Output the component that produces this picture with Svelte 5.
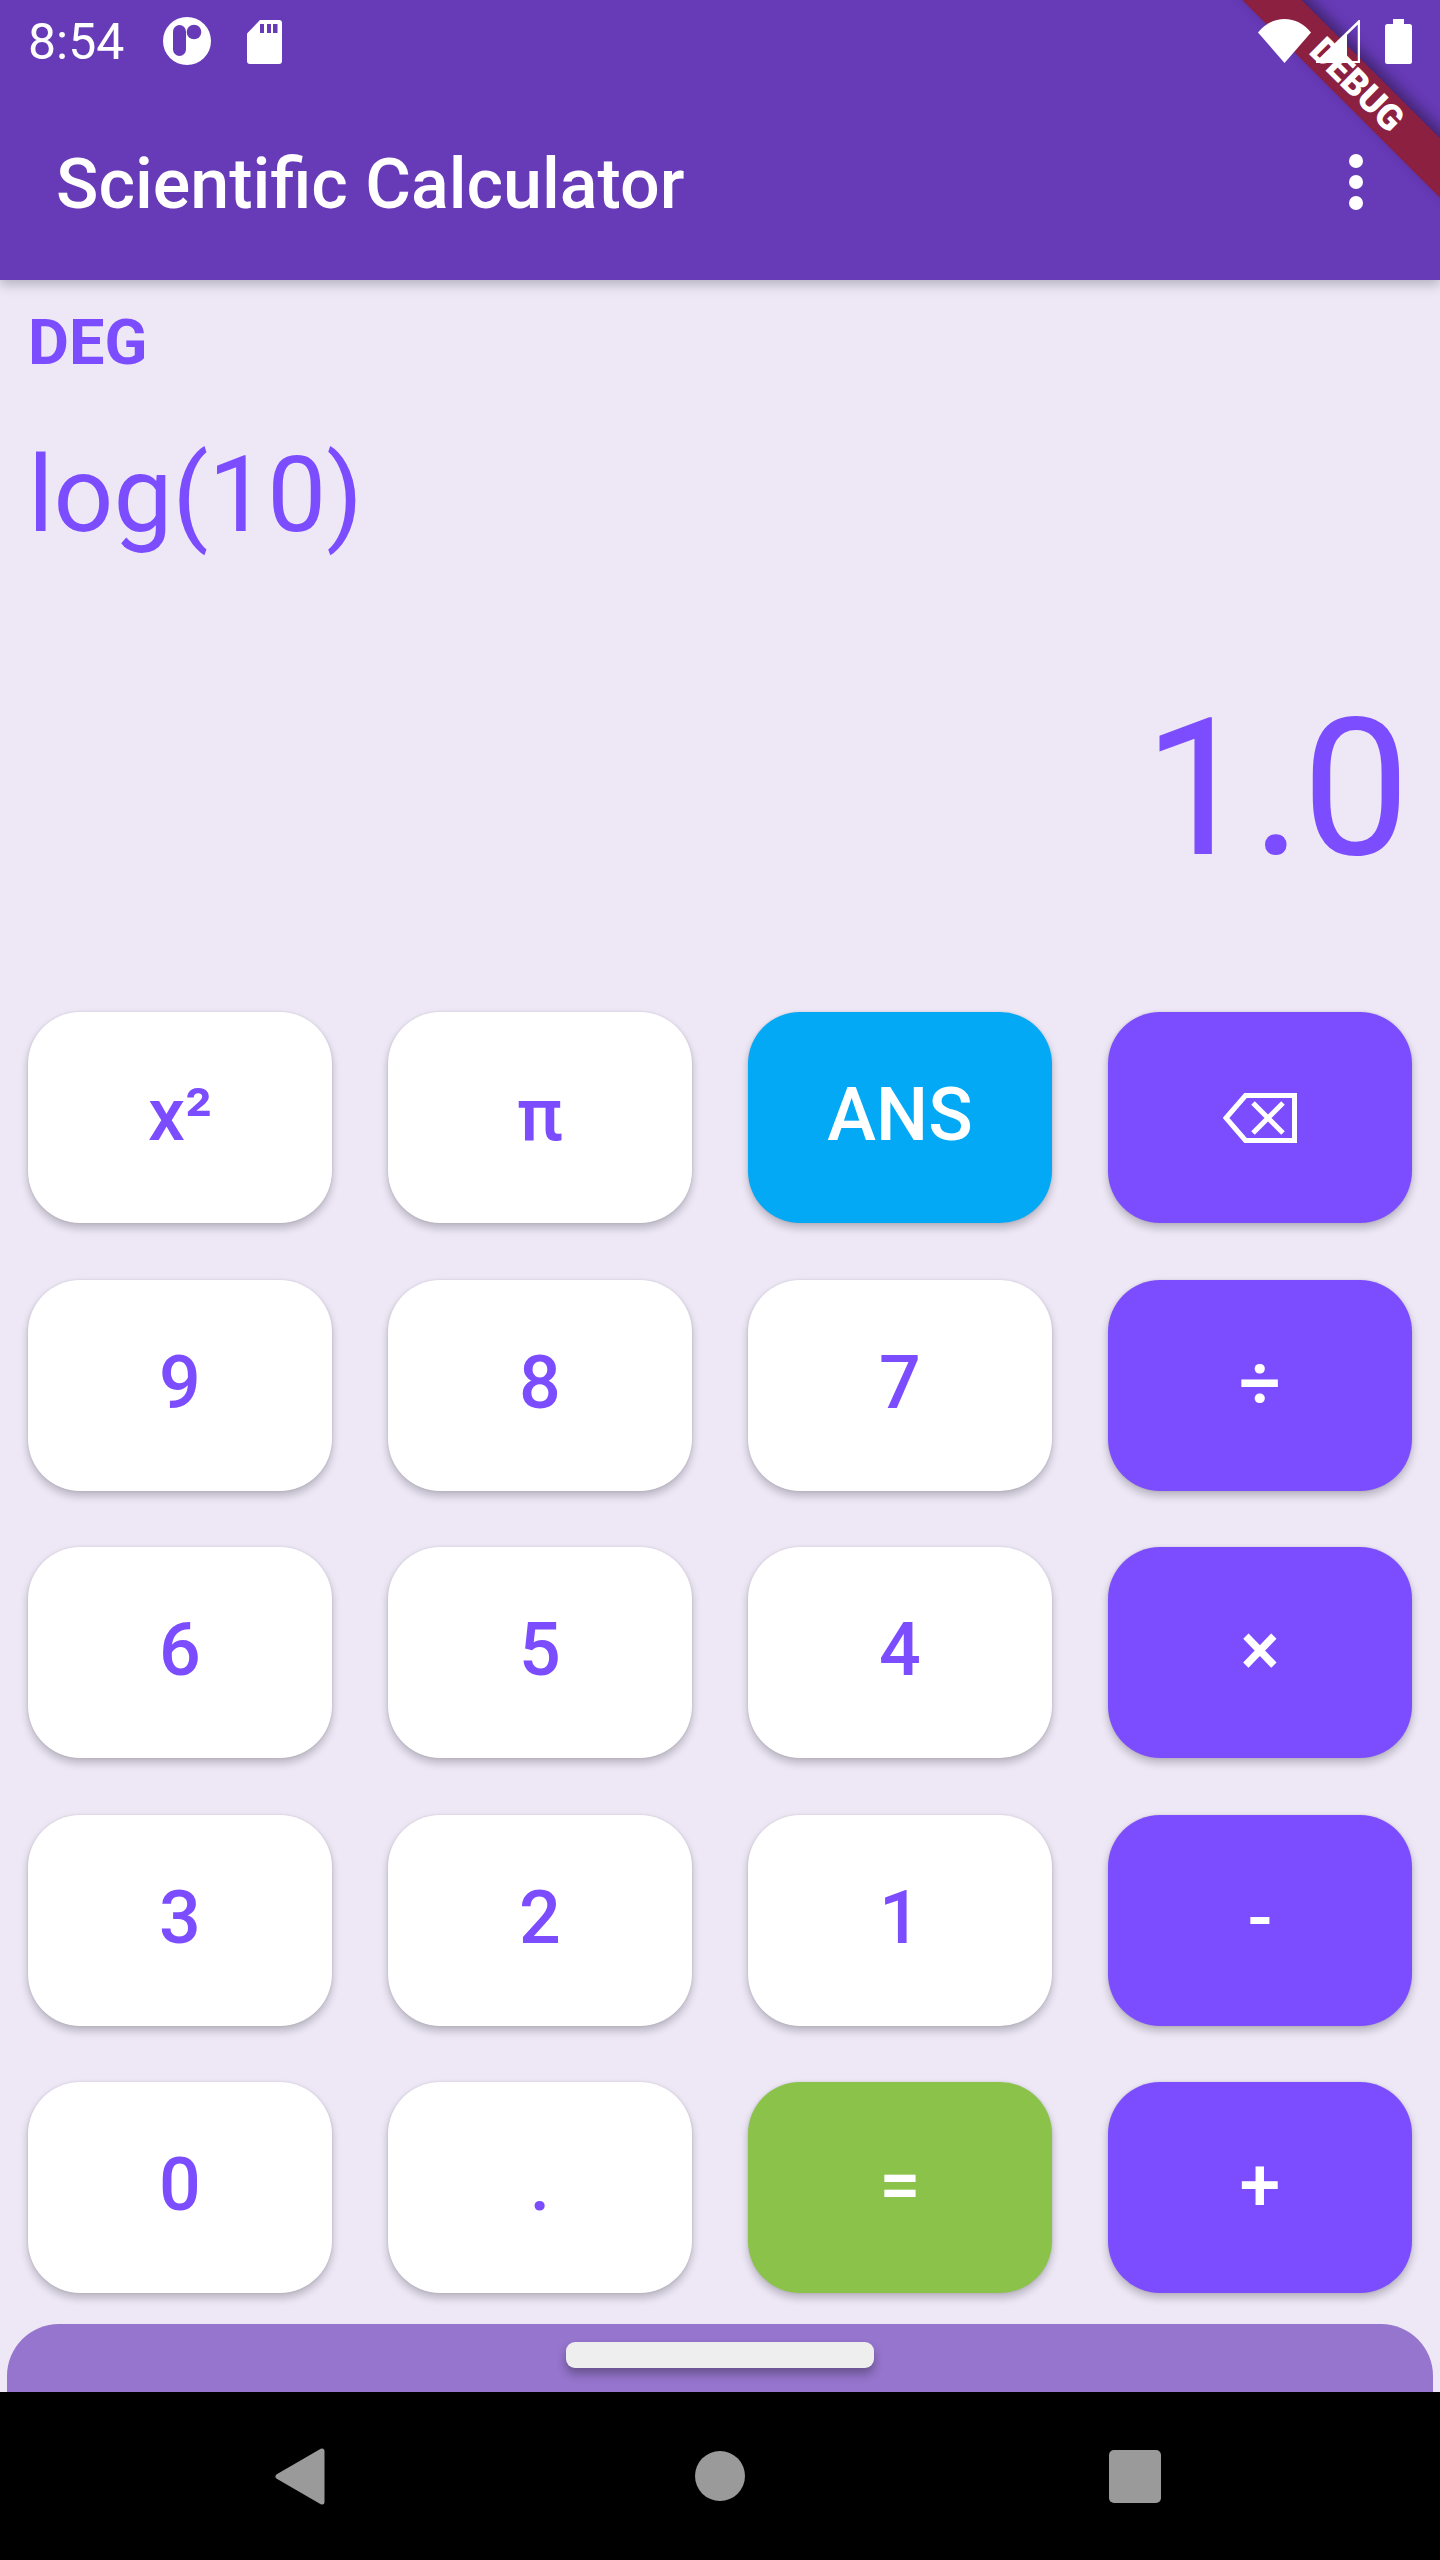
<script>
	const keys = [
		{ label: 'x²', kind: 'plain' },
		{ label: 'π', kind: 'plain' },
		{ label: 'ANS', kind: 'ans' },
		{ label: '', kind: 'op', icon: true },
		{ label: '9', kind: 'plain' },
		{ label: '8', kind: 'plain' },
		{ label: '7', kind: 'plain' },
		{ label: '÷', kind: 'op' },
		{ label: '6', kind: 'plain' },
		{ label: '5', kind: 'plain' },
		{ label: '4', kind: 'plain' },
		{ label: '×', kind: 'op' },
		{ label: '3', kind: 'plain' },
		{ label: '2', kind: 'plain' },
		{ label: '1', kind: 'plain' },
		{ label: '-', kind: 'op' },
		{ label: '0', kind: 'plain' },
		{ label: '.', kind: 'plain' },
		{ label: '=', kind: 'eq' },
		{ label: '+', kind: 'op' }
	];
</script>

<div class="screen">
	<header>
		<div class="status">
			<span class="time">8:54</span>
			<svg class="app-icon" width="48" height="48" viewBox="0 0 48 48">
				<circle cx="24" cy="24" r="24" fill="#fff" />
				<rect x="10" y="8" width="13" height="31" rx="6.5" fill="#673ab7" />
				<circle cx="31" cy="15" r="7.3" fill="#673ab7" />
			</svg>
			<svg class="sd-icon" width="35" height="44" viewBox="0 0 35 44">
				<path d="M13 0H32a3 3 0 0 1 3 3V41a3 3 0 0 1-3 3H3a3 3 0 0 1-3-3V13.5Z" fill="#fff" />
				<path d="M13 4h4v9h-4zM20 4h4v9h-4zM26 4h4.500v9H26z" fill="#673ab7" />
			</svg>
			<div class="status-right">
				<svg width="53" height="44" viewBox="0 0 53 44">
					<path d="M0 13.500C7 5 16 0 26.500 0S46 5 53 13.500L26.500 44Z" fill="#fff" />
				</svg>
				<svg width="44" height="43" viewBox="0 0 44 43">
					<path d="M1 42.200L43 1.500V42.200Z" fill="none" stroke="#fff" stroke-width="2.500" />
					<path d="M1 43L31 13V43Z" fill="#fff" />
				</svg>
				<svg width="27" height="45" viewBox="0 0 27 45">
					<path d="M8 0H19V5H24.500A2.500 2.500 0 0 1 27 7.500V42.500A2.500 2.500 0 0 1 24.500 45H2.500A2.500 2.500 0 0 1 0 42.500V7.500A2.500 2.500 0 0 1 2.500 5H8Z" fill="#fff" />
				</svg>
			</div>
		</div>
		<div class="toolbar">
			<h1>Scientific Calculator</h1>
			<div class="more">
				<i></i><i></i><i></i>
			</div>
		</div>
	</header>

	<div class="banner">DEBUG</div>

	<section class="display">
		<div class="mode">DEG</div>
		<div class="expr">log(10)</div>
		<div class="result">1.0</div>
	</section>

	<section class="keys">
		{#each keys as key}
			<button class={key.kind}>
				{#if key.icon}
					<svg width="74" height="50" viewBox="0 0 74 50">
						<path d="M3 25L22.500 2.500H71.500V47.500H22.500Z" fill="none" stroke="#fff" stroke-width="5" />
						<path d="M30 10L60 40M60 10L30 40" fill="none" stroke="#fff" stroke-width="5" />
					</svg>
				{:else}
					{key.label}
				{/if}
			</button>
		{/each}
	</section>

	<div class="sheet">
		<div class="handle"></div>
	</div>

	<nav>
		<svg class="back" width="50" height="57" viewBox="0 0 50 57">
			<path d="M3 28.500L47 3V54Z" fill="#9a9a9a" stroke="#9a9a9a" stroke-width="5" stroke-linejoin="round" />
		</svg>
		<div class="home"></div>
		<div class="recents"></div>
	</nav>
</div>

<style>
	:global(body) {
		background: #ede7f6;
	}

	.screen {
		position: relative;
		width: 1440px;
		height: 2560px;
		overflow: hidden;
		display: flex;
		flex-direction: column;
		background: #ede7f6;
		font-family: Roboto, "Liberation Sans", sans-serif;
	}

	header {
		height: 280px;
		flex: none;
		background: #673ab7;
		color: #fff;
		box-shadow: 0 4px 12px rgba(0, 0, 0, 0.25);
	}

	.status {
		position: relative;
		z-index: 2;
		height: 84px;
		display: flex;
		align-items: center;
		padding: 0 28px 0 28px;
	}

	.time {
		font-size: 50px;
		width: 135px;
	}

	.app-icon {
		margin-right: 36px;
		margin-bottom: 2px;
	}

	.status-right {
		margin-left: auto;
		display: flex;
		align-items: center;
		gap: 5px;
		margin-bottom: 2px;
	}

	.status-right svg:last-child {
		margin-left: 20px;
	}

	.toolbar {
		height: 196px;
		display: flex;
		align-items: center;
		justify-content: space-between;
		padding: 0 77px 0 56px;
	}

	h1 {
		margin: 3px 0 0;
		font-size: 70px;
		font-weight: 500;
	}

	.more {
		display: flex;
		flex-direction: column;
		gap: 7px;
	}

	.more i {
		display: block;
		width: 14px;
		height: 14px;
		border-radius: 50%;
		background: #fff;
	}

	.banner {
		position: absolute;
		z-index: 1;
		left: 1157px;
		top: 64px;
		width: 400px;
		height: 42px;
		line-height: 42px;
		text-align: center;
		transform: rotate(45deg);
		background: #8b2040;
		box-shadow: 0 -6px 14px rgba(0, 0, 0, 0.4);
		color: #fff;
		font-size: 36px;
		font-weight: 900;
	}

	.display {
		height: 732px;
		flex: none;
		display: flex;
		flex-direction: column;
		color: #7c4dff;
		padding: 26px 30px 0 28px;
		box-sizing: border-box;
	}

	.mode {
		font-size: 63px;
		font-weight: 700;
		line-height: 74px;
	}

	.expr {
		font-size: 105px;
		line-height: 124px;
		margin-top: 54px;
	}

	.result {
		font-size: 192px;
		line-height: 230px;
		text-align: right;
		margin-top: 116px;
	}

	.keys {
		flex: none;
		display: grid;
		grid-template-columns: repeat(4, 304px);
		grid-auto-rows: 211px;
		column-gap: 56px;
		row-gap: 56.500px;
		padding: 0 28px;
	}

	button {
		border: none;
		padding: 0 0 5px;
		border-radius: 52px;
		font-family: inherit;
		font-size: 73.500px;
		font-weight: 500;
		display: flex;
		align-items: center;
		justify-content: center;
		box-shadow: 0 5px 9px rgba(0, 0, 0, 0.22), 0 0 3px rgba(0, 0, 0, 0.1);
	}

	button svg {
		margin-top: 5px;
	}

	.plain {
		background: #fff;
		color: #7c4dff;
	}

	.op {
		background: #7c4dff;
		color: #fff;
	}

	.ans {
		background: #03a9f4;
		color: #fff;
	}

	.eq {
		background: #8bc34a;
		color: #fff;
	}

	.sheet {
		flex: none;
		height: 68px;
		margin: 31px 7px 0;
		box-sizing: border-box;
		padding-top: 18px;
		background: #9575cd;
		border-radius: 52px 52px 0 0;
	}

	.handle {
		width: 308px;
		height: 26px;
		margin: 0 auto;
		border-radius: 9px;
		background: #eee;
		box-shadow: 0 6px 10px rgba(0, 0, 0, 0.3);
	}

	nav {
		flex: none;
		height: 168px;
		background: #000;
		display: flex;
		align-items: center;
		padding-left: 275px;
	}

	.home {
		width: 50px;
		height: 50px;
		border-radius: 50%;
		background: #9a9a9a;
		margin-left: 370px;
	}

	.recents {
		width: 52px;
		height: 53px;
		border-radius: 5px;
		background: #9a9a9a;
		margin-left: 364px;
	}
</style>
